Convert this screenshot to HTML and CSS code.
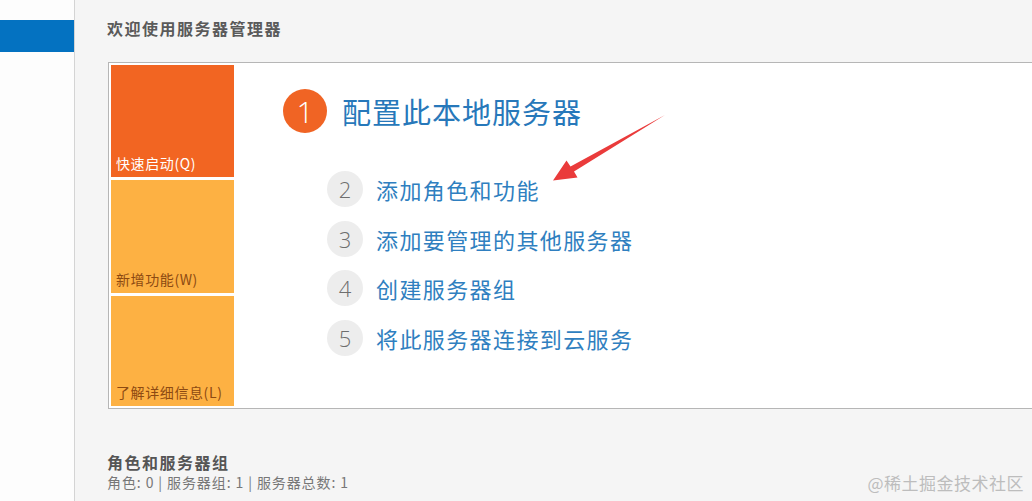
FILE: index.html
```html
<!DOCTYPE html>
<html lang="zh-CN">
<head>
<meta charset="utf-8">
<title>服务器管理器</title>
<link rel="stylesheet" href="styles.css">
</head>
<body>
<div class="app">
  <aside class="sidebar">
    <div class="nav-active"></div>
  </aside>
  <main class="main">
    <h1 class="welcome">欢迎使用服务器管理器</h1>
    <section class="panel">
      <div class="tiles">
        <div class="tile tile-quick"><span>快速启动(Q)</span></div>
        <div class="tile tile-new"><span>新增功能(W)</span></div>
        <div class="tile tile-learn"><span>了解详细信息(L)</span></div>
      </div>
      <div class="steps">
        <div class="step-main">
          <span class="num-big">1</span>
          <span class="title-big">配置此本地服务器</span>
        </div>
        <ul class="step-list">
          <li><span class="num">2</span><span class="label">添加角色和功能</span></li>
          <li><span class="num">3</span><span class="label">添加要管理的其他服务器</span></li>
          <li><span class="num">4</span><span class="label">创建服务器组</span></li>
          <li><span class="num">5</span><span class="label">将此服务器连接到云服务</span></li>
        </ul>
      </div>
    </section>
    <section class="roles">
      <h2 class="roles-title">角色和服务器组</h2>
      <p class="roles-sub">角色: 0 | 服务器组: 1 | 服务器总数: 1</p>
    </section>
  </main>
</div>
<svg class="arrow" width="1032" height="501" viewBox="0 0 1032 501">
  <polygon points="665,115 574,171.5 577.5,177.5 553,180.5 566.5,160.5 570.5,166.5" fill="#ea3b3b"/>
</svg>
<div class="watermark">@稀土掘金技术社区</div>
</body>
</html>
```
FILE: styles.css
```css
* { box-sizing: border-box; }
html, body { margin: 0; padding: 0; }
body {
  width: 1032px;
  height: 501px;
  overflow: hidden;
  font-family: "Noto Sans CJK SC", "Noto Sans", sans-serif;
  background: #f5f5f5;
  position: relative;
}
.app {
  display: flex;
  height: 501px;
}
.sidebar {
  width: 75px;
  flex: none;
  background: #fdfdfd;
  border-right: 1px solid #d4d4d4;
  padding-top: 20px;
}
.nav-active {
  width: 74px;
  height: 32px;
  background: #0472c1;
}
.main {
  flex: 1;
  min-width: 0;
  overflow: hidden;
  padding-left: 33px;
  padding-top: 17px;
}
.welcome {
  margin: 0 0 0 -1px;
  font-size: 16px;
  line-height: 22px;
  letter-spacing: 1.5px;
  font-weight: 700;
  color: #5a5a5a;
}
.panel {
  margin-top: 23px;
  width: 1000px;
  height: 347px;
  background: #fff;
  border: 1px solid #b6b6b6;
  padding: 2px;
  display: flex;
}
.tiles {
  width: 123px;
  flex: none;
  display: flex;
  flex-direction: column;
  gap: 3px;
}
.tile {
  flex: 1;
  display: flex;
  align-items: flex-end;
  padding: 0 4px 5px 5px;
  font-size: 14px;
  line-height: 18px;
  letter-spacing: 0.6px;
  white-space: nowrap;
}
.tile-quick { background: #f26522; color: #fff; flex: 0 0 112px; }
.tile-new { background: #fdb143; color: #8d4a12; flex: 0 0 113px; }
.tile-learn { background: #fdb143; color: #8d4a12; }
.steps {
  flex: 1;
  padding-left: 49px;
  padding-top: 24px;
}
.step-main {
  display: flex;
  align-items: center;
  gap: 15px;
}
.num-big {
  width: 44px;
  height: 44px;
  border-radius: 50%;
  background: #f06424;
  color: #fff;
  font-family: "Open Sans", "Noto Sans", sans-serif;
  font-weight: 300;
  font-size: 30px;
  display: flex;
  align-items: center;
  justify-content: center;
}
.title-big {
  font-size: 29px;
  letter-spacing: 1px;
  color: #2778ba;
  line-height: 36px;
}
.step-list {
  list-style: none;
  margin: 38px 0 0 44px;
  padding: 0;
  display: flex;
  flex-direction: column;
  gap: 13.5px;
}
.step-list li {
  display: flex;
  align-items: center;
  gap: 13px;
  height: 36px;
}
.num {
  width: 36px;
  height: 36px;
  border-radius: 50%;
  background: #ededed;
  color: #6e6e6e;
  font-family: "Open Sans", "Noto Sans", sans-serif;
  font-weight: 300;
  font-size: 22px;
  display: flex;
  align-items: center;
  justify-content: center;
}
.label {
  font-size: 22px;
  letter-spacing: 1.4px;
  color: #2f7fc0;
}
.roles {
  margin-top: 43px;
}
.roles-title {
  margin: 0 0 0 -1px;
  font-size: 16px;
  line-height: 20px;
  letter-spacing: 1.5px;
  font-weight: 700;
  color: #555;
}
.roles-sub {
  margin: 0 0 0 -1px;
  font-size: 14px;
  line-height: 20px;
  letter-spacing: 0.9px;
  color: #777;
}
.arrow {
  position: absolute;
  left: 0;
  top: 0;
  pointer-events: none;
}
.watermark {
  position: absolute;
  right: 8px;
  bottom: 6px;
  font-size: 17px;
  line-height: 24px;
  color: #bdbdbd;
  letter-spacing: 0.5px;
}
```
